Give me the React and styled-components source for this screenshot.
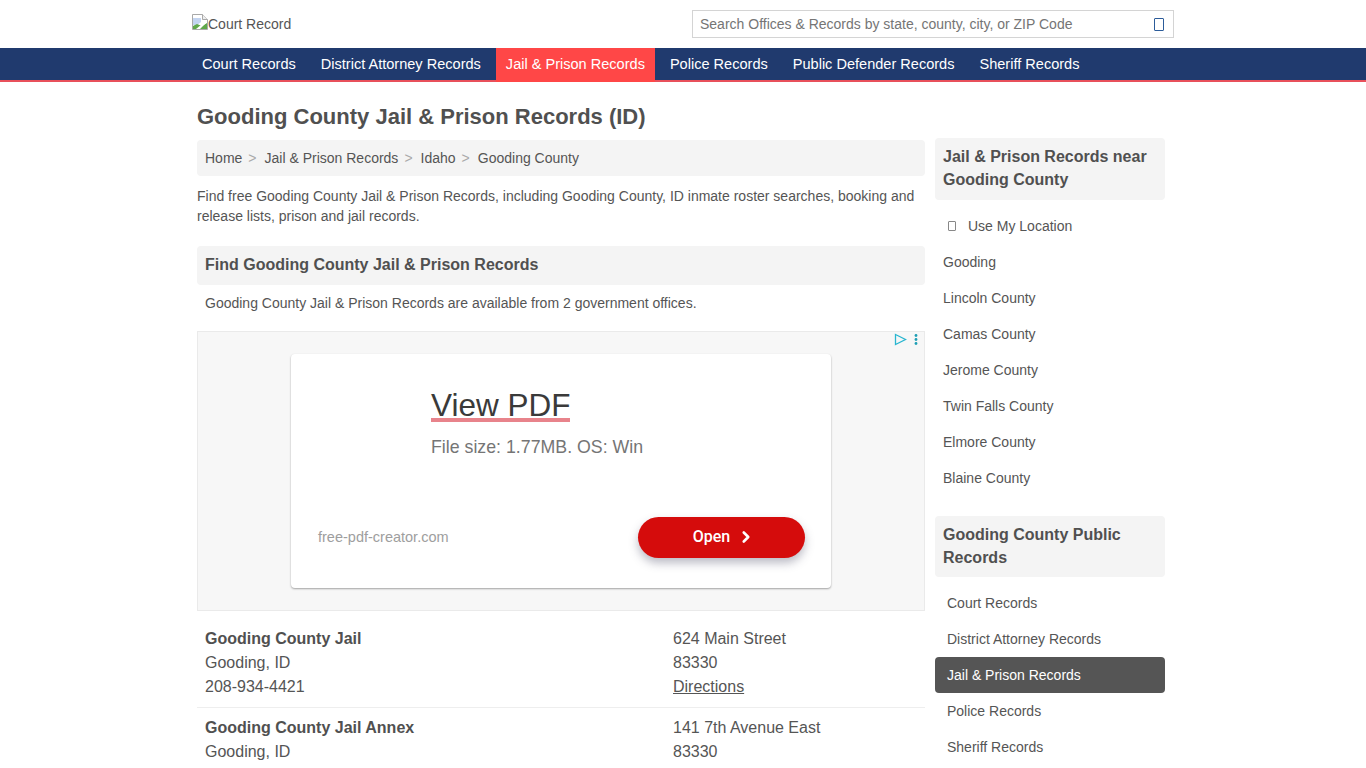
import React from 'react';
import styled, { createGlobalStyle } from 'styled-components';
import { ChevronRight } from 'lucide-react';

const GlobalStyle = createGlobalStyle`
  html, body {
    margin: 0;
    height: 100%;
    overflow: hidden;
    background: #fff;
  }
  body {
    font-family: "Liberation Sans", Arial, sans-serif;
    font-size: 14px;
    color: #555;
  }
  * {
    box-sizing: border-box;
  }
`;

const Header = styled.header`
  width: 982px;
  height: 48px;
  margin: 0 auto;
  display: flex;
  align-items: center;
  justify-content: space-between;
`;

const Logo = styled.a`
  display: flex;
  align-items: flex-start;
  height: 20px;
  font-size: 14px;
  line-height: 20px;
  color: #555;
`;

const SearchBox = styled.div`
  width: 482px;
  height: 28px;
  border: 1px solid #d4d4d4;
  padding: 0 9px 0 7px;
  display: flex;
  align-items: center;
  justify-content: space-between;
  color: #757575;
`;

const MissingGlyph = styled.span`
  display: block;
  flex: none;
  width: ${(p) => p.$w}px;
  height: ${(p) => p.$h}px;
  border: 1px solid ${(p) => p.$color};
  border-radius: 1px;
`;

const NavBar = styled.nav`
  height: 34px;
  background: #203a6e;
  border-bottom: 2px solid #e8505b;
`;

const NavInner = styled.div`
  width: 982px;
  height: 34px;
  margin: 0 auto;
  display: flex;
  gap: 5px;
`;

const NavLink = styled.a`
  height: 34px;
  padding: 0 10px;
  font-size: 14.55px;
  line-height: 32px;
  color: #fff;
  background: ${(p) => (p.$active ? '#ff4747' : 'transparent')};
`;

const Page = styled.div`
  width: 972px;
  margin: 0 auto;
`;

const Title = styled.h1`
  margin: 0;
  padding-top: 21px;
  height: 56px;
  font-size: 22px;
  line-height: 27px;
  font-weight: 700;
  color: #505050;
`;

const Columns = styled.div`
  display: flex;
  gap: 10px;
  align-items: flex-start;
`;

const Main = styled.main`
  width: 728px;
  padding-top: 2px;
`;

const Side = styled.aside`
  width: 230px;
`;

const Breadcrumb = styled.div`
  height: 36px;
  padding: 0 8px;
  display: flex;
  align-items: center;
  background: #f4f4f4;
  border-radius: 4px;
`;

const Crumb = styled.a`
  color: #555;
`;

const CrumbSep = styled.span`
  color: #aaa;
  padding: 0 8px 0 6px;
`;

const Intro = styled.p`
  margin: 10px 0 20px;
  line-height: 20px;
`;

const SectionHead = styled.h2`
  margin: 0;
  height: 39px;
  padding: 0 8px;
  font-size: 16px;
  line-height: 38px;
  font-weight: 700;
  color: #505050;
  background: #f4f4f4;
  border-radius: 4px;
`;

const Available = styled.p`
  margin: 8px 0 18px;
  padding: 0 8px;
  line-height: 20px;
`;

const AdFrame = styled.div`
  position: relative;
  height: 280px;
  padding: 22px 93px 0;
  background: #f7f7f7;
  border: 1px solid #eaeaea;
`;

const AdBadge = styled.div`
  position: absolute;
  top: 1px;
  right: 6px;
  display: flex;
  gap: 7px;
`;

const AdCard = styled.div`
  height: 234px;
  padding: 38px 26px 0;
  display: flex;
  flex-direction: column;
  background: #fff;
  border-radius: 4px;
  box-shadow: 0 1px 2px rgba(0, 0, 0, 0.35);
`;

const AdTitle = styled.div`
  align-self: flex-start;
  margin-left: 114px;
  font-size: 31.5px;
  line-height: 26px;
  color: #3a3a3a;
  border-bottom: 4px solid #e8838b;
`;

const AdText = styled.div`
  margin: 14px 0 0 114px;
  font-size: 17.75px;
  line-height: 22px;
  color: #757575;
`;

const AdFooter = styled.div`
  margin-top: 59px;
  display: flex;
  align-items: center;
  justify-content: space-between;
`;

const AdDomain = styled.span`
  margin: 0 0 2px 1px;
  font-size: 14.5px;
  color: #9e9e9e;
`;

const AdButton = styled.button`
  width: 167px;
  height: 41px;
  padding: 0 0 2px 5px;
  border: none;
  border-radius: 21px;
  display: flex;
  align-items: center;
  justify-content: center;
  gap: 7px;
  font: 16px "Roboto", "Liberation Sans", sans-serif;
  font-weight: 500;
  color: #fff;
  background: #d50c0c;
  box-shadow: 0 5px 10px rgba(60, 60, 90, 0.35);
`;

const Offices = styled.div`
  padding-top: 8px;
`;

const Office = styled.div`
  display: grid;
  grid-template-columns: 468px 1fr;
  padding: 8px;
  font-size: 16px;
  line-height: 24px;
  border-bottom: ${(p) => (p.$last ? 'none' : '1px solid #eee')};
`;

const OfficeName = styled.strong`
  display: block;
  color: #505050;
`;

const Directions = styled.a`
  display: block;
  color: #555;
  text-decoration: underline;
`;

const SideHead = styled.h3`
  margin: 0;
  padding: 7px 8px 8.6px;
  font-size: 16px;
  line-height: 23px;
  font-weight: 700;
  color: #505050;
  background: #f4f4f4;
  border-radius: 4px;
`;

const SideList = styled.div`
  padding: 8px 0 20px;
`;

const SideItem = styled.a`
  display: flex;
  align-items: center;
  height: 36px;
  padding: 0 ${(p) => (p.$inset ? 12 : 8)}px;
  border-radius: 4px;
  color: ${(p) => (p.$active ? '#fff' : '#555')};
  background: ${(p) => (p.$active ? '#555' : 'transparent')};
`;

const LocationIcon = styled.span`
  width: 25px;
  padding-left: 5px;
`;

const navLinks = [
  'Court Records',
  'District Attorney Records',
  'Jail & Prison Records',
  'Police Records',
  'Public Defender Records',
  'Sheriff Records',
];

const nearby = [
  'Gooding',
  'Lincoln County',
  'Camas County',
  'Jerome County',
  'Twin Falls County',
  'Elmore County',
  'Blaine County',
];

const publicRecords = [
  'Court Records',
  'District Attorney Records',
  'Jail & Prison Records',
  'Police Records',
  'Sheriff Records',
];

const BrokenImage = () => (
  <svg width="16" height="16" viewBox="0 0 16 16">
    <path d="M0.5 0.5H10.5L15.5 5.5V15.5H0.5Z" fill="#fff" stroke="#a9a9a9" />
    <path d="M10.5 0.5V5.5H15.5" fill="#eee" stroke="#a9a9a9" />
    <path d="M1 4H9V8L4 12L1 11Z" fill="#c3d4f0" />
    <path d="M1 15V12L5 10L10 12L15 9V15Z" fill="#5fa84a" />
    <path d="M4 15L15 6V8L8 15Z" fill="#fff" />
  </svg>
);

const AdChoices = () => (
  <svg width="13" height="13" viewBox="0 0 13 13">
    <path d="M1.5 1.5L11.5 6.5L1.5 11.5Z" fill="none" stroke="#29b6d0" strokeWidth="1.3" />
  </svg>
);

const AdMenu = () => (
  <svg width="4" height="13" viewBox="0 0 4 13">
    <circle cx="2" cy="2.5" r="1.4" fill="#1f9fb5" />
    <circle cx="2" cy="6.5" r="1.4" fill="#1f9fb5" />
    <circle cx="2" cy="10.5" r="1.4" fill="#1f9fb5" />
  </svg>
);

const App = () => {
  return (
    <>
      <GlobalStyle />
      <Header>
        <Logo>
          <BrokenImage />
          Court Record
        </Logo>
        <SearchBox>
          Search Offices &amp; Records by state, county, city, or ZIP Code
          <MissingGlyph $w={10} $h={13} $color="#2c5c9a" />
        </SearchBox>
      </Header>

      <NavBar>
        <NavInner>
          {navLinks.map((link) => (
            <NavLink key={link} $active={link === 'Jail & Prison Records'}>
              {link}
            </NavLink>
          ))}
        </NavInner>
      </NavBar>

      <Page>
        <Title>Gooding County Jail &amp; Prison Records (ID)</Title>
        <Columns>
          <Main>
            <Breadcrumb>
              <Crumb>Home</Crumb>
              <CrumbSep>&gt;</CrumbSep>
              <Crumb>Jail &amp; Prison Records</Crumb>
              <CrumbSep>&gt;</CrumbSep>
              <Crumb>Idaho</Crumb>
              <CrumbSep>&gt;</CrumbSep>
              <Crumb>Gooding County</Crumb>
            </Breadcrumb>
            <Intro>
              Find free Gooding County Jail &amp; Prison Records, including Gooding County, ID inmate
              roster searches, booking and release lists, prison and jail records.
            </Intro>
            <SectionHead>Find Gooding County Jail &amp; Prison Records</SectionHead>
            <Available>Gooding County Jail &amp; Prison Records are available from 2 government offices.</Available>

            <AdFrame>
              <AdBadge>
                <AdChoices />
                <AdMenu />
              </AdBadge>
              <AdCard>
                <AdTitle>View PDF</AdTitle>
                <AdText>File size: 1.77MB. OS: Win</AdText>
                <AdFooter>
                  <AdDomain>free-pdf-creator.com</AdDomain>
                  <AdButton>
                    Open <ChevronRight size={18} strokeWidth={3.5} />
                  </AdButton>
                </AdFooter>
              </AdCard>
            </AdFrame>

            <Offices>
              <Office>
                <div>
                  <OfficeName>Gooding County Jail</OfficeName>
                  Gooding, ID
                  <br />
                  208-934-4421
                </div>
                <div>
                  624 Main Street
                  <br />
                  83330
                  <Directions>Directions</Directions>
                </div>
              </Office>
              <Office $last>
                <div>
                  <OfficeName>Gooding County Jail Annex</OfficeName>
                  Gooding, ID
                </div>
                <div>
                  141 7th Avenue East
                  <br />
                  83330
                </div>
              </Office>
            </Offices>
          </Main>

          <Side>
            <SideHead>Jail &amp; Prison Records near Gooding County</SideHead>
            <SideList>
              <SideItem>
                <LocationIcon>
                  <MissingGlyph $w={8} $h={10} $color="#888" />
                </LocationIcon>
                Use My Location
              </SideItem>
              {nearby.map((place) => (
                <SideItem key={place}>{place}</SideItem>
              ))}
            </SideList>
            <SideHead>Gooding County Public Records</SideHead>
            <SideList>
              {publicRecords.map((record) => (
                <SideItem key={record} $inset $active={record === 'Jail & Prison Records'}>
                  {record}
                </SideItem>
              ))}
            </SideList>
          </Side>
        </Columns>
      </Page>
    </>
  );
};

export default App;
